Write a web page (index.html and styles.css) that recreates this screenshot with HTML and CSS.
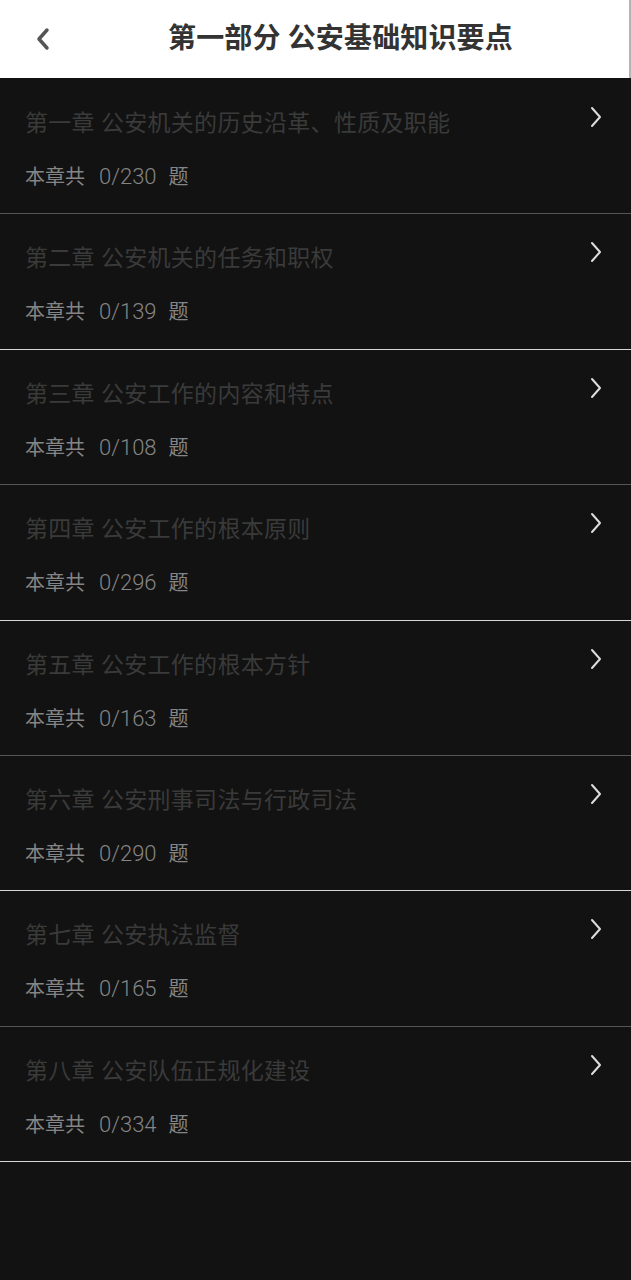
FILE: index.html
```html
<!DOCTYPE html>
<html lang="zh-CN">
<head>
<meta charset="utf-8">
<title>第一部分 公安基础知识要点</title>
<link rel="stylesheet" href="styles.css">
</head>
<body>
<header class="topbar">
  <div class="back">
    <svg width="16" height="24" viewBox="0 0 16 24"><path d="M12 3 L4 12 L12 21" fill="none" stroke="#555" stroke-width="3.5" stroke-linecap="round" stroke-linejoin="round"/></svg>
  </div>
  <h1 class="title">第一部分 公安基础知识要点</h1>
</header>
<main class="list">
  <div class="row row-a">
    <div class="info"><div class="name">第一章 公安机关的历史沿革、性质及职能</div><div class="count"><span>本章共</span><span class="num">0/230</span><span>题</span></div></div>
    <svg class="chev" width="14" height="24" viewBox="0 0 14 24"><path d="M3 3 L11 12 L3 21" fill="none" stroke="#ddd" stroke-width="2" stroke-linecap="round" stroke-linejoin="round"/></svg>
  </div>
  <div class="row row-b">
    <div class="info"><div class="name">第二章 公安机关的任务和职权</div><div class="count"><span>本章共</span><span class="num">0/139</span><span>题</span></div></div>
    <svg class="chev" width="14" height="24" viewBox="0 0 14 24"><path d="M3 3 L11 12 L3 21" fill="none" stroke="#ddd" stroke-width="2" stroke-linecap="round" stroke-linejoin="round"/></svg>
  </div>
  <div class="row row-a">
    <div class="info"><div class="name">第三章 公安工作的内容和特点</div><div class="count"><span>本章共</span><span class="num">0/108</span><span>题</span></div></div>
    <svg class="chev" width="14" height="24" viewBox="0 0 14 24"><path d="M3 3 L11 12 L3 21" fill="none" stroke="#ddd" stroke-width="2" stroke-linecap="round" stroke-linejoin="round"/></svg>
  </div>
  <div class="row row-b">
    <div class="info"><div class="name">第四章 公安工作的根本原则</div><div class="count"><span>本章共</span><span class="num">0/296</span><span>题</span></div></div>
    <svg class="chev" width="14" height="24" viewBox="0 0 14 24"><path d="M3 3 L11 12 L3 21" fill="none" stroke="#ddd" stroke-width="2" stroke-linecap="round" stroke-linejoin="round"/></svg>
  </div>
  <div class="row row-a">
    <div class="info"><div class="name">第五章 公安工作的根本方针</div><div class="count"><span>本章共</span><span class="num">0/163</span><span>题</span></div></div>
    <svg class="chev" width="14" height="24" viewBox="0 0 14 24"><path d="M3 3 L11 12 L3 21" fill="none" stroke="#ddd" stroke-width="2" stroke-linecap="round" stroke-linejoin="round"/></svg>
  </div>
  <div class="row row-b">
    <div class="info"><div class="name">第六章 公安刑事司法与行政司法</div><div class="count"><span>本章共</span><span class="num">0/290</span><span>题</span></div></div>
    <svg class="chev" width="14" height="24" viewBox="0 0 14 24"><path d="M3 3 L11 12 L3 21" fill="none" stroke="#ddd" stroke-width="2" stroke-linecap="round" stroke-linejoin="round"/></svg>
  </div>
  <div class="row row-a">
    <div class="info"><div class="name">第七章 公安执法监督</div><div class="count"><span>本章共</span><span class="num">0/165</span><span>题</span></div></div>
    <svg class="chev" width="14" height="24" viewBox="0 0 14 24"><path d="M3 3 L11 12 L3 21" fill="none" stroke="#ddd" stroke-width="2" stroke-linecap="round" stroke-linejoin="round"/></svg>
  </div>
  <div class="row row-b">
    <div class="info"><div class="name">第八章 公安队伍正规化建设</div><div class="count"><span>本章共</span><span class="num">0/334</span><span>题</span></div></div>
    <svg class="chev" width="14" height="24" viewBox="0 0 14 24"><path d="M3 3 L11 12 L3 21" fill="none" stroke="#ddd" stroke-width="2" stroke-linecap="round" stroke-linejoin="round"/></svg>
  </div>
</main>
</body>
</html>
```

FILE: styles.css
```css
html, body {
  margin: 0;
  padding: 0;
  background: #121212;
  font-family: Roboto, "Noto Sans CJK SC", sans-serif;
}
body {
  min-height: 1280px;
}
.topbar {
  height: 78px;
  background: #fff;
  display: flex;
  align-items: center;
  border-right: 2px solid #b4b4b4;
  box-sizing: border-box;
}
.back {
  width: 88px;
  padding-left: 35px;
  box-sizing: border-box;
  display: flex;
  align-items: center;
}
.back svg {
  display: block;
}
.title {
  margin: 0 0 0 80px;
  font-size: 28px;
  font-weight: bold;
  color: #333;
  line-height: 36px;
  letter-spacing: 0.15px;
}
.list {
  display: flex;
  flex-direction: column;
  padding-top: 1px;
}
.row {
  height: 135.4px;
  box-sizing: border-box;
  display: flex;
  justify-content: space-between;
  align-items: flex-start;
  padding: 30px 28px 0 25px;
}
.row-a { border-bottom: 1px solid #555; }
.row-b { border-bottom: 1px solid #d6d6d6; }
.info {
  display: flex;
  flex-direction: column;
}
.name {
  font-size: 23px;
  line-height: 30px;
  color: #3a3a3a;
  letter-spacing: 0.3px;
}
.count {
  margin-top: 25px;
  font-size: 20px;
  line-height: 26px;
  color: #858585;
  display: flex;
  align-items: baseline;
}
.count .num {
  margin: 0 12px 0 14px;
  font-size: 22px;
  font-weight: 300;
}
.chev {
  display: block;
  margin-top: -4px;
}
```
